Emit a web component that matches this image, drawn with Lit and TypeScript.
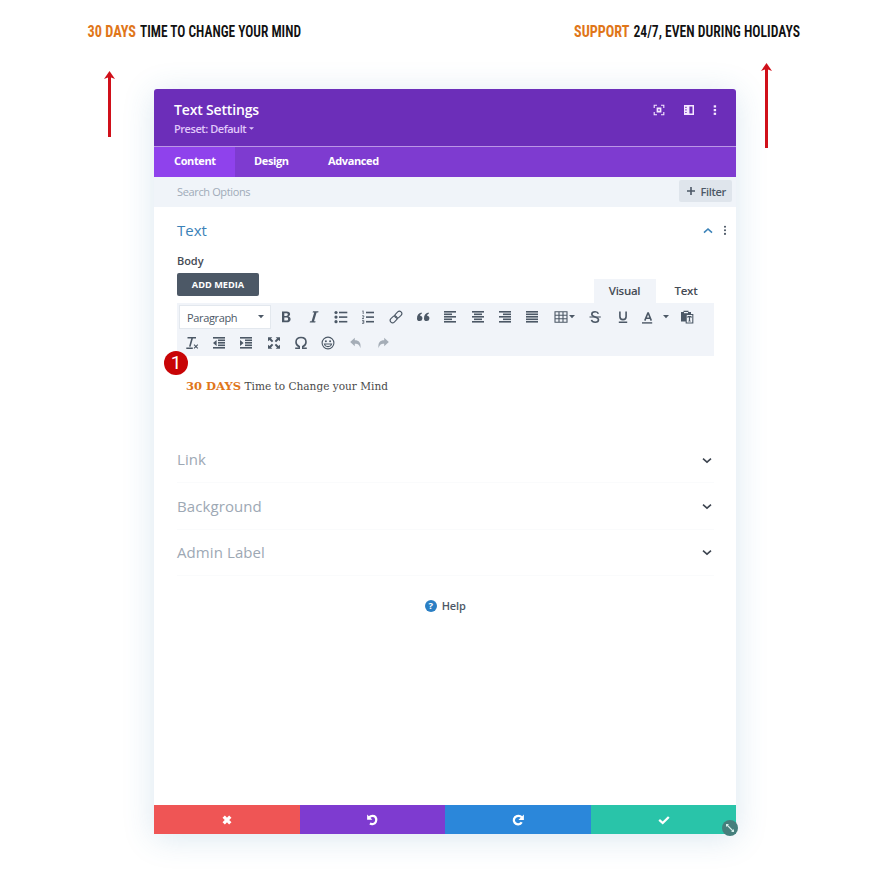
import { LitElement, html, svg, css } from "lit";
import { customElement } from "lit/decorators.js";

const lines = (rows: number[][]) =>
  svg`${rows.map(([x, y, w]) => svg`<rect x=${x} y=${y} width=${w} height="1.6"/>`)}`;

const stack = (rows: number[][]) => lines(rows.map(([x, w], i) => [x, 2 + i * 2.5, w]));

const caret = svg`<path d="M0 0H6L3 3.2Z"/>`;

const icons: Record<string, unknown> = {
  bold: svg`<path fill-rule="evenodd" d="M4 2.5H8.6C11 2.5 12.1 3.5 12.1 5.1C12.1 6.3 11.4 7.2 10.4 7.6C11.8 7.9 12.6 8.9 12.6 10.2C12.6 12.3 11.1 13.3 8.7 13.3H4ZM6.3 4.3V6.9H8.1C9.3 6.9 9.8 6.4 9.8 5.6C9.8 4.7 9.3 4.3 8.1 4.3ZM6.3 8.6V11.5H8.4C9.6 11.5 10.1 11 10.1 10C10.1 9.1 9.5 8.6 8.3 8.6Z"/>`,
  italic: svg`<path d="M7 2.3H12.5L12.2 3.5H10.6L8 12.2H9.6L9.2 13.4H3.7L4 12.2H5.6L8.2 3.5H6.6Z"/>`,
  ul: svg`${lines([[6, 2.7, 8.3], [6, 7.3, 8.3], [6, 11.9, 8.3]])}<circle cx="3" cy="3.5" r="1.6"/><circle cx="3" cy="8.1" r="1.6"/><circle cx="3" cy="12.7" r="1.6"/>`,
  ol: svg`${lines([[6, 2.7, 8], [6, 7.3, 8], [6, 11.9, 8]])}<path class="l thin" d="M2.3 2.2L3.2 1.8V5M2 6.8H3.8V8L2.2 9.5H4M2 11.4H3.8V14.4H2M2.4 12.9H3.8"/>`,
  link: svg`<g transform="rotate(-45 8 8)" class="l"><rect x=".8" y="5.6" width="7.8" height="4.8" rx="2.4"/><rect x="7.4" y="5.6" width="7.8" height="4.8" rx="2.4"/></g>`,
  quote: svg`<path d="M7 4.4C5.7 4.9 5.1 5.7 5.1 6.7A2.7 2.7 0 1 1 2 9.4C1.9 6.4 3.5 4.3 6.5 3.6ZM14 4.4C12.7 4.9 12.1 5.7 12.1 6.7A2.7 2.7 0 1 1 9 9.4C8.9 6.4 10.5 4.3 13.5 3.6Z"/>`,
  left: stack([[2, 12], [2, 8], [2, 12], [2, 8], [2, 12]]),
  center: stack([[2, 12], [4, 8], [2, 12], [4, 8], [2, 12]]),
  right: stack([[2, 12], [6, 8], [2, 12], [6, 8], [2, 12]]),
  justify: stack([[2, 12], [2, 12], [2, 12], [2, 12], [2, 12]]),
  table: svg`<path class="l" d="M2 2.7H14V13.3H2ZM2 6.2H14M2 9.7H14M6 2.7V13.3M10 2.7V13.3"/>`,
  strike: svg`<path class="l bold" d="M11.4 4.8C10.9 3.4 9.7 2.8 8.1 2.8C6 2.8 4.8 3.8 4.8 5.2C4.8 6.7 6 7.3 8.2 7.9C10.4 8.5 11.5 9.2 11.5 10.8C11.5 12.3 10.2 13.3 8.2 13.3C6.1 13.3 4.8 12.4 4.5 10.9"/><path class="l" d="M2.5 8H13.8"/>`,
  underline: svg`<path class="l bold" d="M4.9 2.5V7.5C4.9 9.5 6 10.6 8 10.6C10 10.6 11.1 9.5 11.1 7.5V2.5M3.8 13.3H12.2"/>`,
  color: svg`<path class="l bold" d="M5.8 11.6L8.9 4H9.3L12.3 11.6M7 9.2H11.1"/><rect x="3" y="13.2" width="10.2" height="1.4"/>`,
  paste: svg`<path d="M2 3H4.5V1.8H9.5V3H12V5H7V12.5H2Z"/><path fill="#f1f4f9" d="M5 3H9V4.2H5Z"/><path class="l" fill="#f1f4f9" d="M7.2 5.5H13.8V14H7.2Z"/><path d="M8.5 7H12.5V9H11.8V8.2H11.1V11.7H11.7V12.5H9.3V11.7H9.9V8.2H9.2V9H8.5Z"/>`,
  clear: svg`<path class="l bold" d="M3.5 2.7H12M8.3 2.7L5.8 11.6M2.3 13.2H8.8"/><path class="l" d="M10 9.6L13.8 13.4M13.8 9.6L10 13.4"/>`,
  outdent: svg`${lines([[2, 2, 12], [7, 4.5, 7], [7, 7, 7], [7, 9.5, 7], [2, 12, 12]])}<path d="M5.6 4.9V11L2 8Z"/>`,
  indent: svg`${lines([[2, 2, 12], [7, 4.5, 7], [7, 7, 7], [7, 9.5, 7], [2, 12, 12]])}<path d="M2 4.9V11L5.6 8Z"/>`,
  full: svg`<path d="M2 2.3H6.3L5 3.6L7.3 5.9L5.9 7.2L3.5 4.9L2 6.3ZM14 2.3V6.3L12.5 4.9L10.1 7.2L8.7 5.9L11 3.6L9.7 2.3ZM2 13.7V9.7L3.5 11.1L5.9 8.8L7.3 10.1L5 12.4L6.3 13.7ZM14 13.7H9.7L11 12.4L8.7 10.1L10.1 8.8L12.5 11.1L14 9.7Z"/>`,
  omega: svg`<path class="l bold" d="M2.2 13.2H6.2V11.6C4.1 10.7 3 9 3 7C3 4.2 5 2.5 8 2.5C11 2.5 13 4.2 13 7C13 9 11.9 10.7 9.8 11.6V13.2H13.8"/>`,
  smile: svg`<circle class="l" cx="8" cy="8" r="5.9"/><circle cx="5.9" cy="6.3" r="1"/><circle cx="10.1" cy="6.3" r="1"/><path class="l" d="M4.4 9C5.2 12.5 10.8 12.5 11.6 9Z"/>`,
  undo: svg`<path d="M6.8 2.7V5.3C11 5.3 13.3 7.8 12.4 13.3C11.6 10 10.3 8.7 6.8 8.7V11.3L2.2 7Z"/>`,
  redo: svg`<path d="M9.2 2.7V5.3C5 5.3 2.7 7.8 3.6 13.3C4.4 10 5.7 8.7 9.2 8.7V11.3L13.8 7Z"/>`,
  focus: svg`<path class="l" d="M3.2 6V3.2H6M10 3.2H12.8V6M12.8 10V12.8H10M6 12.8H3.2V10"/><path fill-rule="evenodd" d="M5.6 5.6H10.4V10.4H5.6ZM7.2 7.2V8.8H8.8V7.2Z"/>`,
  panel: svg`<path fill-rule="evenodd" d="M3 3H13V13H3ZM8.4 4.6V11.4H11.5V4.6ZM4.3 4.8V6H5.6V4.8ZM4.3 7.3V8.6H5.6V7.3ZM4.3 9.9V11.1H5.6V9.9Z"/>`,
  dots: svg`<rect x="6.7" y="3.3" width="2.4" height="2.2"/><rect x="6.7" y="7" width="2.4" height="2.2"/><rect x="6.7" y="10.7" width="2.4" height="2.2"/>`,
  minidots: svg`<circle cx="8" cy="4.7" r="1.05"/><circle cx="8" cy="8.3" r="1.05"/><circle cx="8" cy="11.9" r="1.05"/>`,
  down: svg`<path class="l chev" d="M4 6.7L8 10.1L12 6.7"/>`,
  up: svg`<path class="l chev" d="M4 10.6L8 7L12 10.6"/>`,
  plus: svg`<path class="l bold" d="M8 4V12M4 8H12"/>`,
  close: svg`<path class="l fat" d="M4.7 4.7L11.3 11.3M11.3 4.7L4.7 11.3"/>`,
  back: svg`<path class="l heavy" d="M4.2 5.4C5.5 4 7.4 3.6 9.1 4.1A4.2 4.2 0 1 1 4.9 11.6"/><path d="M2.1 2.5V7.8H7.4Z"/>`,
  forward: svg`<path class="l heavy" d="M11.8 5.2C10.5 3.9 8.6 3.6 6.9 4.1A4.2 4.2 0 1 0 11.7 10.2"/><path d="M13.9 2.5V8H8.4Z"/>`,
  check: svg`<path class="l heavy" d="M3.2 7.9L6.7 11L12.8 5"/>`,
  resize: svg`<path class="l" d="M5 5L11 11"/><path d="M4 4H7L4 7ZM12 12H9L12 9Z"/>`,
};

const icon = (name: string, extra = "") =>
  html`<svg class="icon ${extra}" viewBox="0 0 16 16">${icons[name]}</svg>`;
const arrow = () => html`<svg class="caret" viewBox="0 0 6 3.2">${caret}</svg>`;

@customElement("app-root")
export class AppRoot extends LitElement {
  static styles = css`
    :host { display: block; position: relative; width: 880px; height: 891px; overflow: hidden; background: #fff;
      font-family: "Open Sans", "Noto Sans", sans-serif; color: #4c5866; }
    * { box-sizing: border-box; }
    svg { display: block; flex: none; }
    .icon { width: 16px; height: 16px; fill: currentColor; }
    .l { stroke: currentColor; stroke-width: 1.1; fill: none; }
    .l[fill] { fill: #f1f4f9; }
    .thin { stroke-width: .8; }
    .bold { stroke-width: 1.6; }
    .chev { stroke-width: 1.6; }
    .heavy { stroke-width: 2.3; }
    .fat { stroke-width: 3.3; }
    .caret { width: 6px; height: 3.2px; fill: currentColor; }
    .promos { display: flex; justify-content: space-between; padding: 18px 78px 0 87px; height: 89px; }
    .promo { height: 26px; overflow: visible; font: 600 16.6px Roboto, sans-serif; font-stretch: 75%; fill: #111; }
    .hl { fill: #e0761a; font-weight: 700; }
    .pointer { position: absolute; fill: #d0101a; }
    .p1 { left: 103px; top: 71px; }
    .p2 { left: 760px; top: 63px; }
    .dialog { width: 582px; height: 745px; margin-left: 154px; border-radius: 3px 3px 0 0; background: #fff;
      display: flex; flex-direction: column; box-shadow: 0 4px 32px rgba(50, 120, 170, .18); }
    .head { height: 58px; flex: none; border-radius: 3px 3px 0 0; background: #6c2eb9; color: #fff; display: flex;
      justify-content: space-between; padding: 10px 13px 0 20px; border-bottom: 1px solid #bb96e6; }
    .title { font-size: 14px; line-height: 21px; font-weight: 600; letter-spacing: -.17px; }
    .preset { display: flex; align-items: center; gap: 3px; font-size: 11px; font-weight: 600; letter-spacing: -.45px; line-height: 17px; color: #e0c8fa; }
    .preset .caret { width: 5px; height: 3px; }
    .head-icons { display: flex; gap: 14px; padding-top: 3px; color: #f5e8ff; }
    .head-icons .icon:last-child { margin-left: -4px; }
    .tabs { height: 30px; flex: none; display: flex; background: #7e3bd0; color: #fff; font-size: 11px; font-weight: 700; letter-spacing: -.38px; line-height: 28px; }
    .tab { padding: 0 20px; width: 80px; white-space: nowrap; }
    .tab.on { background: #8f42ec; width: 81px; }
    .tab.des { padding-left: 19px; }
    .tab.adv { margin-left: -7px; }
    .search { height: 30px; flex: none; display: flex; align-items: center; justify-content: space-between; background: #f0f4f9;
      padding: 0 4px 2px 23px; font-size: 11px; letter-spacing: -.36px; color: #9fabb8; }
    .filter { display: flex; align-items: center; gap: 2px; height: 22px; width: 53px; padding-left: 3.5px; background: #dfe5ec; color: #4c5866; font-weight: 600; border-radius: 2px; }
    .body { flex: 1; display: flex; flex-direction: column; padding: 0 22.5px 0 23px; }
    .sec { display: flex; align-items: center; height: 46px; font-size: 15px; }
    .sec .name { flex: 1; margin-top: -1px; }
    .sec.open { color: #3b82b8; margin-right: -19px; }
    .sec.open .minidot { color: #4c5866; margin: 0 0 0 1px; }
    .label { font-size: 11px; font-weight: 600; line-height: 16px; color: #454b54; letter-spacing: -.05px; }
    .tools-head { display: flex; justify-content: space-between; height: 34px; }
    .media { margin-top: 3.5px; height: 23px; width: 82px; border-radius: 2px; background: #4c5866; color: #fff; font-weight: 700; font-size: 9.2px; line-height: 23px; text-align: center; }
    .modes { display: flex; padding-top: 10px; margin-right: -3px; font-size: 11.5px; font-weight: 600; letter-spacing: -.3px; color: #454b54; line-height: 24px; text-align: center; }
    .mode { width: 61px; }
    .mode.on { width: 62px; background: #f1f4f9; }
    .toolbar { height: 53px; background: #f1f4f9; color: #4c5866; padding: 1.5px 0 0 1px; }
    .row { display: flex; align-items: center; height: 25px; }
    .row + .row { padding-top: 1.5px; }
    .select { display: flex; align-items: center; justify-content: space-between; width: 92px; height: 24px; margin: 0 1.8px 0 1px; padding: 0 6px 0 7px; background: #fff; border: 1px solid #e3e8ee; font-size: 11px; letter-spacing: -.36px; }
    .cell { width: 27.3px; display: flex; justify-content: center; align-items: center; }
    .cell.table { width: 36px; }
    .cell.color { width: 22px; }
    .cell.drop { width: 15px; }
    .row + .row .cell { padding-left: .5px; }
    .dim { color: #a5adb7; }
    .editor { height: 81px; padding: 21px 0 0 9px; }
    .copy { overflow: visible; font: 11.8px "DejaVu Serif", serif; fill: #4a4a4a; }
    .closed { color: #9da8b4; border-bottom: 1px solid #fafbfc; height: 46.4px; }
    .closed .icon { color: #3e4550; margin-right: -1.5px; }
    .closed .name { letter-spacing: .09px; }
    .help { display: flex; justify-content: center; align-items: center; gap: 5px; margin-top: 21px; font-size: 11px; font-weight: 600; line-height: 18px; letter-spacing: -.1px; }
    .q { width: 12px; height: 12px; border-radius: 50%; background: #2b7fc4; color: #fff; font-size: 9.5px; font-weight: 700; line-height: 12px; text-align: center; }
    .foot { height: 29px; flex: none; display: grid; grid-template-columns: 146px 145px 146px 145px; color: #fff; }
    .act { display: flex; align-items: center; justify-content: center; }
    .red { background: #ef5555; } .violet { background: #7e3bd0; } .blue { background: #2b87da; } .green { background: #29c4a9; }
    .badge { position: absolute; left: 164px; top: 351px; width: 24px; height: 24px; border-radius: 50%; background: #c80406; color: #fff; font: 19px/24px Roboto, sans-serif; text-align: center; }
    .grip { position: absolute; left: 722px; top: 820px; width: 16px; height: 16px; border-radius: 50%; background: #467f7c; color: #d5eeea; }
  `;

  render() {
    return html`
      <div class="promos">
        <svg class="promo" width="220" height="26"><text class="hl" x=".5" y="19" textLength="48.5" lengthAdjust="spacingAndGlyphs">30 DAYS</text><text x="53" y="19" textLength="161" lengthAdjust="spacingAndGlyphs">TIME TO CHANGE YOUR MIND</text></svg>
        <svg class="promo" width="229" height="26"><text class="hl" x="1" y="19" textLength="55.5" lengthAdjust="spacingAndGlyphs">SUPPORT</text><text x="60.5" y="19" textLength="166.5" lengthAdjust="spacingAndGlyphs">24/7, EVEN DURING HOLIDAYS</text></svg>
      </div>
      <div class="dialog">
        <div class="head">
          <div><div class="title">Text Settings</div><div class="preset">Preset: Default ${arrow()}</div></div>
          <div class="head-icons">${icon("focus")}${icon("panel")}${icon("dots")}</div>
        </div>
        <div class="tabs"><div class="tab on">Content</div><div class="tab des">Design</div><div class="tab adv">Advanced</div></div>
        <div class="search"><span>Search Options</span><div class="filter">${icon("plus")}Filter</div></div>
        <div class="body">
          <div class="sec open"><span class="name">Text</span>${icon("up")}${icon("minidots", "minidot")}</div>
          <div class="label">Body</div>
          <div class="tools-head">
            <div class="media">ADD MEDIA</div>
            <div class="modes"><div class="mode on">Visual</div><div class="mode">Text</div></div>
          </div>
          <div class="toolbar">
            <div class="row">
              <div class="select">Paragraph ${arrow()}</div>
              ${["bold", "italic", "ul", "ol", "link", "quote", "left", "center", "right", "justify"].map((n) => html`<div class="cell">${icon(n)}</div>`)}
              <div class="cell table">${icon("table")}${arrow()}</div>
              <div class="cell">${icon("strike")}</div><div class="cell">${icon("underline")}</div>
              <div class="cell color">${icon("color")}</div><div class="cell drop">${arrow()}</div>
              <div class="cell">${icon("paste")}</div>
            </div>
            <div class="row">
              ${["clear", "outdent", "indent", "full", "omega", "smile"].map((n) => html`<div class="cell">${icon(n)}</div>`)}
              <div class="cell dim">${icon("undo")}</div><div class="cell dim">${icon("redo")}</div>
            </div>
          </div>
          <div class="editor">
            <svg class="copy" width="206" height="18"><text class="hl" x="0" y="13" textLength="55" lengthAdjust="spacingAndGlyphs">30 DAYS</text><text x="58.5" y="13" textLength="143.5" lengthAdjust="spacingAndGlyphs">Time to Change your Mind</text></svg>
          </div>
          ${["Link", "Background", "Admin Label"].map((n) => html`<div class="sec closed"><span class="name">${n}</span>${icon("down")}</div>`)}
          <div class="help"><span class="q">?</span>Help</div>
        </div>
        <div class="foot">
          <div class="act red">${icon("close")}</div><div class="act violet">${icon("back")}</div>
          <div class="act blue">${icon("forward")}</div><div class="act green">${icon("check")}</div>
        </div>
      </div>
      <svg class="pointer p1" width="13" height="66"><path d="M6.5 0L12 8L8 6.4V66H5V6.4L1 8Z"/></svg>
      <svg class="pointer p2" width="13" height="85"><path d="M6.5 0L12 8L8 6.4V85H5V6.4L1 8Z"/></svg>
      <div class="badge">1</div>
      <div class="grip">${icon("resize")}</div>
    `;
  }
}
